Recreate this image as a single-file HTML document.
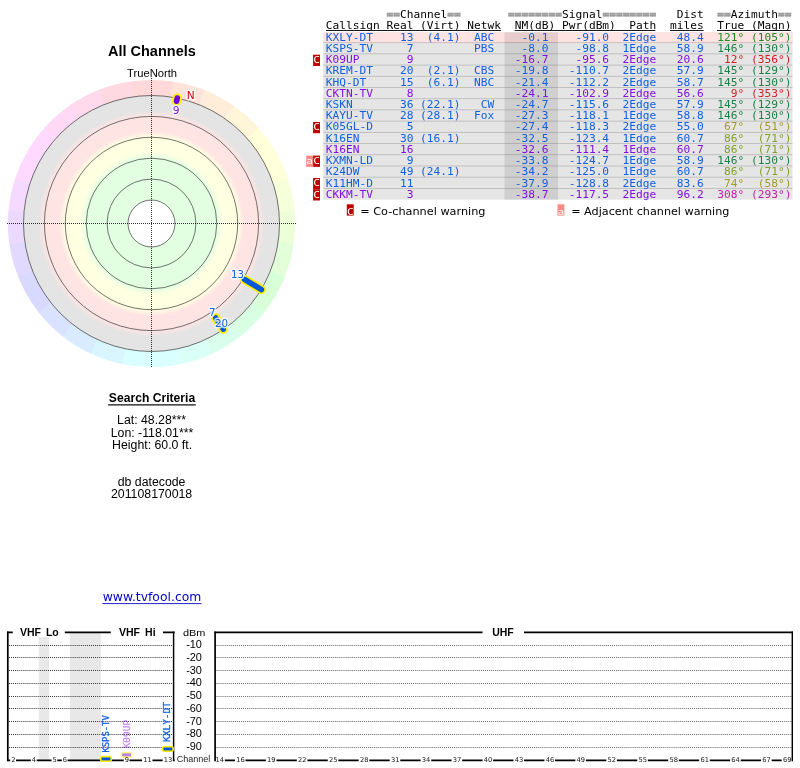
<!DOCTYPE html>
<html lang="en"><head><meta charset="utf-8"><title>TV Fool - All Channels radar plot</title>
<style>
html,body{margin:0;padding:0;background:#fff;}
body{width:800px;height:768px;position:relative;overflow:hidden;font-family:"Liberation Sans",Arial,sans-serif;color:#000;}
.gfx{position:absolute;left:0;top:0;}
.rl{font-family:"DejaVu Sans","Liberation Sans",sans-serif;paint-order:stroke;stroke:#fff;stroke-opacity:.8;stroke-width:2.8px;stroke-linejoin:round;}
.vt{font-family:"DejaVu Sans Mono","Liberation Mono",monospace;}
.bt{font-family:"DejaVu Sans Mono","Liberation Mono",monospace;}
.t{position:absolute;white-space:pre;line-height:1;}
.c{transform:translateX(-50%);text-align:center;}
.title{font-weight:bold;}

.sc{font-weight:bold;}

.link{font-family:"DejaVu Sans","Liberation Sans",sans-serif;color:#0000cc;}
.leg{font-family:"DejaVu Sans","Liberation Sans",sans-serif;}
.m{font-family:"DejaVu Sans Mono","Liberation Mono",monospace;font-size:11.21px;transform:scaleY(0.9);transform-origin:0 9.1px;}
.hd{color:#000;}
.eq{color:#9c9c9c;font-weight:bold;-webkit-text-stroke:0.5px #9c9c9c;}

.b{color:#1060e0}.p{color:#8010e0}
.bl{font-weight:bold;}


#wrap{position:absolute;left:0;top:0;width:800px;height:768px;will-change:transform;}
.ch{font-family:"DejaVu Sans","Liberation Sans",sans-serif;color:#111;}
</style></head><body><div id="wrap">
<svg class="gfx" width="800" height="768" viewBox="0 0 800 768">
<defs>
<radialGradient id="rg" gradientUnits="userSpaceOnUse" cx="151.5" cy="223.5" r="128.0">
<stop offset="0.0000" stop-color="#ffffff"/>
<stop offset="0.1836" stop-color="#ffffff"/>
<stop offset="0.1836" stop-color="#e2ffe2"/>
<stop offset="0.5102" stop-color="#e2ffe2"/>
<stop offset="0.5586" stop-color="#ffffe2"/>
<stop offset="0.6734" stop-color="#ffffe2"/>
<stop offset="0.7219" stop-color="#ffe4e4"/>
<stop offset="0.8367" stop-color="#ffe4e4"/>
<stop offset="0.8852" stop-color="#e4e4e4"/>
<stop offset="1.0000" stop-color="#e4e4e4"/>
</radialGradient>
</defs>
<g class="hue-ring"><path d="M151.50 223.50L172.30 81.41A143.60 143.60 0 0 1 205.22 90.33Z" fill="#ffe2d9"/><path d="M151.50 223.50L204.53 90.05A143.60 143.60 0 0 1 234.48 106.30Z" fill="#ffecd9"/><path d="M151.50 223.50L233.87 105.87A143.60 143.60 0 0 1 259.27 128.59Z" fill="#fff6d9"/><path d="M151.50 223.50L258.77 128.03A143.60 143.60 0 0 1 288.05 179.05Z" fill="#ffffd9"/><path d="M151.50 223.50L287.81 178.34A143.60 143.60 0 0 1 294.62 211.73Z" fill="#f6ffd9"/><path d="M151.50 223.50L294.55 210.98A143.60 143.60 0 0 1 293.47 245.05Z" fill="#ecffd9"/><path d="M151.50 223.50L293.59 244.30A143.60 143.60 0 0 1 284.67 277.22Z" fill="#e2ffd9"/><path d="M151.50 223.50L284.95 276.53A143.60 143.60 0 0 1 263.68 313.15Z" fill="#d9ffd9"/><path d="M151.50 223.50L264.15 312.56A143.60 143.60 0 0 1 239.97 336.61Z" fill="#d9ffe2"/><path d="M151.50 223.50L240.56 336.15A143.60 143.60 0 0 1 211.51 353.96Z" fill="#d9ffec"/><path d="M151.50 223.50L212.19 353.65A143.60 143.60 0 0 1 179.81 364.28Z" fill="#d9fff6"/><path d="M151.50 223.50L180.55 364.13A143.60 143.60 0 0 1 121.72 363.98Z" fill="#d9ffff"/><path d="M151.50 223.50L122.45 364.13A143.60 143.60 0 0 1 90.13 353.33Z" fill="#d9f6ff"/><path d="M151.50 223.50L90.81 353.65A143.60 143.60 0 0 1 61.85 335.68Z" fill="#d9ecff"/><path d="M151.50 223.50L62.44 336.15A143.60 143.60 0 0 1 38.39 311.97Z" fill="#d9e2ff"/><path d="M151.50 223.50L38.85 312.56A143.60 143.60 0 0 1 17.77 275.83Z" fill="#d9d9ff"/><path d="M151.50 223.50L18.05 276.53A143.60 143.60 0 0 1 9.31 243.56Z" fill="#e2d9ff"/><path d="M151.50 223.50L9.41 244.30A143.60 143.60 0 0 1 8.51 210.24Z" fill="#ecd9ff"/><path d="M151.50 223.50L8.45 210.98A143.60 143.60 0 0 1 15.42 177.63Z" fill="#f6d9ff"/><path d="M151.50 223.50L15.19 178.34A143.60 143.60 0 0 1 44.73 127.47Z" fill="#ffd9ff"/><path d="M151.50 223.50L44.23 128.03A143.60 143.60 0 0 1 69.75 105.44Z" fill="#ffd9f6"/><path d="M151.50 223.50L69.13 105.87A143.60 143.60 0 0 1 99.17 89.77Z" fill="#ffd9ec"/><path d="M151.50 223.50L98.47 90.05A143.60 143.60 0 0 1 131.44 81.31Z" fill="#ffd9e2"/><path d="M151.50 223.50L130.70 81.41A143.60 143.60 0 0 1 173.05 81.53Z" fill="#ffd9d9"/></g>
<circle cx="151.5" cy="223.5" r="128.0" fill="url(#rg)"/>
<circle cx="151.5" cy="223.5" r="23.5" fill="none" stroke="#2c2c2c" stroke-width="0.66"/>
<circle cx="151.5" cy="223.5" r="44.4" fill="none" stroke="#2c2c2c" stroke-width="0.66"/>
<circle cx="151.5" cy="223.5" r="65.3" fill="none" stroke="#2c2c2c" stroke-width="0.66"/>
<circle cx="151.5" cy="223.5" r="86.2" fill="none" stroke="#2c2c2c" stroke-width="0.66"/>
<circle cx="151.5" cy="223.5" r="107.1" fill="none" stroke="#2c2c2c" stroke-width="0.66"/>
<circle cx="151.5" cy="223.5" r="128.0" fill="none" stroke="#2c2c2c" stroke-width="0.66"/>
<path d="M7 223.5 H297" stroke="#000" stroke-opacity="0.8" stroke-width="1" stroke-dasharray="1 1" fill="none"/>
<path d="M151.5 78 V367.5" stroke="#000" stroke-opacity="0.8" stroke-width="1" stroke-dasharray="1 1" fill="none"/>
<g stroke-linecap="round" opacity="1"><path d="M215.69 317.95L223.33 329.20" stroke="#ffee00" stroke-width="9.4"/><path d="M215.69 317.95L223.33 329.20" stroke="#0058d8" stroke-width="5.4"/></g>
<g stroke-linecap="round" opacity="1"><path d="M244.50 279.38L261.39 289.53" stroke="#ffee00" stroke-width="9.0"/><path d="M244.50 279.38L261.39 289.53" stroke="#0058d8" stroke-width="5.6"/></g>
<g stroke-linecap="round" opacity="1"><path d="M176.61 101.15L177.26 98.02" stroke="#ffee00" stroke-width="9.4"/><path d="M176.61 101.15L177.26 98.02" stroke="#7000e0" stroke-width="5.6"/></g>
<text x="231.1" y="277.6" font-size="10.2" fill="#1060e0" text-anchor="start" class="rl">13</text>
<text x="209.0" y="315.6" font-size="10.3" fill="#1060e0" text-anchor="start" class="rl">7</text>
<text x="214.9" y="327.1" font-size="10.3" fill="#1060e0" text-anchor="start" class="rl">20</text>
<text x="172.85" y="114.2" font-size="10.6" fill="#8010e0" text-anchor="start" class="rl">9</text>
<text x="186.7" y="98.9" font-size="10.6" fill="#cc0000" text-anchor="start" class="rl">N</text>
<rect x="323.25" y="32.3" width="469.25" height="167.40" fill="#e5e5e5"/>
<rect x="323.25" y="32.3" width="469.25" height="10.40" fill="#ffe2e2"/>
<rect x="504.5" y="32.3" width="53.5" height="167.40" fill="#000" opacity="0.095"/>
<rect x="323.25" y="42.25" width="469.25" height="0.8" fill="#000" opacity="0.2"/>
<rect x="323.25" y="53.46" width="469.25" height="0.8" fill="#000" opacity="0.2"/>
<rect x="323.25" y="64.67" width="469.25" height="0.8" fill="#000" opacity="0.2"/>
<rect x="323.25" y="75.88" width="469.25" height="0.8" fill="#000" opacity="0.2"/>
<rect x="323.25" y="87.09" width="469.25" height="0.8" fill="#000" opacity="0.2"/>
<rect x="323.25" y="98.30" width="469.25" height="0.8" fill="#000" opacity="0.2"/>
<rect x="323.25" y="109.51" width="469.25" height="0.8" fill="#000" opacity="0.2"/>
<rect x="323.25" y="120.72" width="469.25" height="0.8" fill="#000" opacity="0.2"/>
<rect x="323.25" y="131.93" width="469.25" height="0.8" fill="#000" opacity="0.2"/>
<rect x="323.25" y="143.14" width="469.25" height="0.8" fill="#000" opacity="0.2"/>
<rect x="323.25" y="154.35" width="469.25" height="0.8" fill="#000" opacity="0.2"/>
<rect x="323.25" y="165.56" width="469.25" height="0.8" fill="#000" opacity="0.2"/>
<rect x="323.25" y="176.77" width="469.25" height="0.8" fill="#000" opacity="0.2"/>
<rect x="323.25" y="187.98" width="469.25" height="0.8" fill="#000" opacity="0.2"/>
<path d="M326 30.5H501 M514.7 30.5H655.3 M670 30.5H703.6 M717 30.5H790.6" stroke="#1a1a1a" stroke-width="1" fill="none"/>
<path d="M108.2 404.9H195.8" stroke="#111" stroke-width="1.4" fill="none"/>
<path d="M102.4 603.6H201.6" stroke="#2020d0" stroke-width="1" fill="none"/>
<rect x="38.9" y="632.4" width="10.3" height="127.89999999999998" fill="#e8e8e8"/>
<rect x="69.8" y="632.4" width="31.1" height="127.89999999999998" fill="#e8e8e8"/>
<path d="M9 645.50H172.6" stroke="#333" stroke-width="1" stroke-dasharray="1 1.05"/>
<path d="M216.4 645.50H791.4" stroke="#666" stroke-width="1" stroke-dasharray="1 1.05"/>
<path d="M9 657.50H172.6" stroke="#333" stroke-width="1" stroke-dasharray="1 1.05"/>
<path d="M216.4 657.50H791.4" stroke="#666" stroke-width="1" stroke-dasharray="1 1.05"/>
<path d="M9 670.50H172.6" stroke="#333" stroke-width="1" stroke-dasharray="1 1.05"/>
<path d="M216.4 670.50H791.4" stroke="#666" stroke-width="1" stroke-dasharray="1 1.05"/>
<path d="M9 683.50H172.6" stroke="#333" stroke-width="1" stroke-dasharray="1 1.05"/>
<path d="M216.4 683.50H791.4" stroke="#666" stroke-width="1" stroke-dasharray="1 1.05"/>
<path d="M9 696.50H172.6" stroke="#333" stroke-width="1" stroke-dasharray="1 1.05"/>
<path d="M216.4 696.50H791.4" stroke="#666" stroke-width="1" stroke-dasharray="1 1.05"/>
<path d="M9 708.50H172.6" stroke="#333" stroke-width="1" stroke-dasharray="1 1.05"/>
<path d="M216.4 708.50H791.4" stroke="#666" stroke-width="1" stroke-dasharray="1 1.05"/>
<path d="M9 721.50H172.6" stroke="#333" stroke-width="1" stroke-dasharray="1 1.05"/>
<path d="M216.4 721.50H791.4" stroke="#666" stroke-width="1" stroke-dasharray="1 1.05"/>
<path d="M9 734.50H172.6" stroke="#333" stroke-width="1" stroke-dasharray="1 1.05"/>
<path d="M216.4 734.50H791.4" stroke="#666" stroke-width="1" stroke-dasharray="1 1.05"/>
<path d="M9 747.50H172.6" stroke="#333" stroke-width="1" stroke-dasharray="1 1.05"/>
<path d="M216.4 747.50H791.4" stroke="#666" stroke-width="1" stroke-dasharray="1 1.05"/>
<rect x="13.5" y="626" width="50.5" height="11.2" fill="#fff"/><rect x="111.5" y="626" width="51" height="11.2" fill="#fff"/><rect x="483" y="626" width="40.5" height="11.2" fill="#fff"/>
<path d="M7.8 631.55 V761.15" stroke="#000" stroke-width="1.7" fill="none"/><path d="M173.6 631.55 V761.15" stroke="#000" stroke-width="1.45" fill="none"/>
<path d="M7 632.4 H12.8 M64.8 632.4 H110.8 M163 632.4 H174.6" stroke="#000" stroke-width="1.7" fill="none"/>
<path d="M215.1 631.55 V761.15" stroke="#000" stroke-width="1.7" fill="none"/><path d="M792.3 631.55 V761.15" stroke="#000" stroke-width="1.45" fill="none"/>
<path d="M214.3 632.4 H482.5 M524 632.4 H793" stroke="#000" stroke-width="1.7" fill="none"/>
<path d="M7.00 760.3H10.20 M16.00 760.3H30.84 M36.64 760.3H51.48 M57.28 760.3H61.80 M67.60 760.3H103.08 M108.88 760.3H123.72 M129.52 760.3H142.06 M152.46 760.3H162.70 M173.10 760.3H174.60" stroke="#000" stroke-width="1.7" fill="none"/>
<path d="M224.90 760.3H234.93 M245.53 760.3H265.88 M276.48 760.3H296.83 M307.43 760.3H327.78 M338.38 760.3H358.72 M369.32 760.3H389.67 M400.27 760.3H420.62 M431.22 760.3H451.57 M462.17 760.3H482.52 M493.12 760.3H513.46 M524.06 760.3H544.41 M555.01 760.3H575.36 M585.96 760.3H606.31 M616.91 760.3H637.26 M647.86 760.3H668.20 M678.80 760.3H699.15 M709.75 760.3H730.10 M740.70 760.3H761.05 M771.65 760.3H781.68 M792.28 760.3H793.00" stroke="#000" stroke-width="1.7" fill="none"/>
<g stroke-linecap="round" opacity="1"><path d="M102.98 758.94H108.98" stroke="#ffee00" stroke-width="6.3"/><path d="M101.58 758.94H110.38" stroke="#0058d8" stroke-width="2.9" stroke-linecap="butt"/></g>
<g stroke-linecap="round" opacity="0.5"><path d="M123.62 754.85H129.62" stroke="#ffee00" stroke-width="6.3"/><path d="M122.22 754.85H131.02" stroke="#7000e0" stroke-width="2.9" stroke-linecap="butt"/></g>
<g stroke-linecap="round" opacity="1"><path d="M164.90 748.97H170.90" stroke="#ffee00" stroke-width="6.3"/><path d="M163.50 748.97H172.30" stroke="#0058d8" stroke-width="2.9" stroke-linecap="butt"/></g>
<text transform="translate(109.40 752.60) rotate(-90)" font-size="8.6" fill="#1060e0" stroke="#1060e0" stroke-width="0.3" opacity="1" textLength="37.4" lengthAdjust="spacingAndGlyphs" class="vt">KSPS-TV</text>
<text transform="translate(130.30 748.30) rotate(-90)" font-size="8.6" fill="#8010e0" stroke="#8010e0" stroke-width="0.3" opacity="0.5" textLength="28.3" lengthAdjust="spacingAndGlyphs" class="vt">K09UP</text>
<text transform="translate(170.40 742.00) rotate(-90)" font-size="8.6" fill="#1060e0" stroke="#1060e0" stroke-width="0.3" opacity="1" textLength="40.0" lengthAdjust="spacingAndGlyphs" class="vt">KXLY-DT</text>
<rect x="313.10" y="54.72" width="6.9" height="11.25" fill="#c00000"/>
<text transform="translate(316.55 63.17) scale(1 0.84)" font-size="11.21" fill="#fff" text-anchor="middle" class="bt">C</text>
<rect x="313.10" y="121.98" width="6.9" height="11.25" fill="#c00000"/>
<text transform="translate(316.55 130.43) scale(1 0.84)" font-size="11.21" fill="#fff" text-anchor="middle" class="bt">C</text>
<rect x="313.10" y="155.61" width="6.9" height="11.25" fill="#c00000"/>
<text transform="translate(316.55 164.06) scale(1 0.84)" font-size="11.21" fill="#fff" text-anchor="middle" class="bt">C</text>
<rect x="306.20" y="155.61" width="6.9" height="11.25" fill="#ff8888"/>
<text transform="translate(309.65 164.06) scale(1 0.84)" font-size="11.21" fill="#fff" text-anchor="middle" class="bt">a</text>
<rect x="313.10" y="178.03" width="6.9" height="11.25" fill="#c00000"/>
<text transform="translate(316.55 186.48) scale(1 0.84)" font-size="11.21" fill="#fff" text-anchor="middle" class="bt">C</text>
<rect x="313.10" y="189.24" width="6.9" height="11.25" fill="#c00000"/>
<text transform="translate(316.55 197.69) scale(1 0.84)" font-size="11.21" fill="#fff" text-anchor="middle" class="bt">C</text>
<rect x="346.80" y="204.30" width="6.9" height="11.30" fill="#c00000"/>
<text transform="translate(350.25 214.80) scale(1 0.84)" font-size="11.21" fill="#fff" text-anchor="middle" class="bt">C</text>
<rect x="557.50" y="204.30" width="6.9" height="11.30" fill="#ff8888"/>
<text transform="translate(560.95 214.80) scale(1 0.84)" font-size="11.21" fill="#fff" text-anchor="middle" class="bt">a</text>
</svg>
<div class="t title c" style="left:151.90px;top:43.77px;font-size:14.5px;">All Channels</div>
<div class="t sub c" style="left:152.10px;top:68.42px;font-size:11.2px;">TrueNorth</div>
<div class="t sc c" style="left:152.00px;top:391.95px;font-size:12.13px;">Search Criteria</div>
<div class="t crit c" style="left:151.60px;top:413.87px;font-size:12.3px;">Lat: 48.28***</div>
<div class="t crit c" style="left:152.00px;top:426.87px;font-size:12.3px;">Lon: -118.01***</div>
<div class="t crit c" style="left:152.10px;top:438.87px;font-size:12.3px;">Height: 60.0 ft.</div>
<div class="t crit c" style="left:151.60px;top:475.87px;font-size:12.3px;">db datecode</div>
<div class="t crit c" style="left:151.60px;top:487.87px;font-size:12.3px;">201108170018</div>
<a class="t link c" style="left:152.00px;top:590.82px;font-size:12.39px;">www.tvfool.com</a>
<span class="t m hd" style="left:386.45px;top:8.90px"><span class="eq">==</span>Channel<span class="eq">==</span></span>
<span class="t m hd" style="left:507.95px;top:8.90px"><span class="eq">========</span>Signal<span class="eq">========</span></span>
<span class="t m hd" style="left:676.70px;top:8.90px">Dist</span>
<span class="t m hd" style="left:717.20px;top:8.90px"><span class="eq">==</span>Azimuth<span class="eq">==</span></span>
<span class="t m hd u" style="left:325.70px;top:19.90px">Callsign Real (Virt) Netwk</span>
<span class="t m hd u" style="left:514.70px;top:19.90px">NM(dB) Pwr(dBm)  Path</span>
<span class="t m hd u" style="left:669.95px;top:19.90px">miles</span>
<span class="t m hd u" style="left:717.20px;top:19.90px">True (Magn)</span>
<span class="t m b" style="left:325.70px;top:31.90px">KXLY-DT    13  (4.1)  ABC</span>
<span class="t m b" style="left:514.70px;top:31.90px"> -0.1    -91.0  2Edge</span>
<span class="t m b" style="left:669.95px;top:31.90px"> 48.4</span>
<span class="t m" style="left:717.20px;top:31.90px;color:#208a20">121° (105°)</span>
<span class="t m b" style="left:325.70px;top:42.90px">KSPS-TV     7         PBS</span>
<span class="t m b" style="left:514.70px;top:42.90px"> -8.0    -98.8  1Edge</span>
<span class="t m b" style="left:669.95px;top:42.90px"> 58.9</span>
<span class="t m" style="left:717.20px;top:42.90px;color:#1a8048">146° (130°)</span>
<span class="t m p" style="left:325.70px;top:53.90px">K09UP       9</span>
<span class="t m p" style="left:514.70px;top:53.90px">-16.7    -95.6  2Edge</span>
<span class="t m p" style="left:669.95px;top:53.90px"> 20.6</span>
<span class="t m" style="left:717.20px;top:53.90px;color:#cc2020"> 12° (356°)</span>
<span class="t m b" style="left:325.70px;top:64.90px">KREM-DT    20  (2.1)  CBS</span>
<span class="t m b" style="left:514.70px;top:64.90px">-19.8   -110.7  2Edge</span>
<span class="t m b" style="left:669.95px;top:64.90px"> 57.9</span>
<span class="t m" style="left:717.20px;top:64.90px;color:#1a8046">145° (129°)</span>
<span class="t m b" style="left:325.70px;top:76.90px">KHQ-DT     15  (6.1)  NBC</span>
<span class="t m b" style="left:514.70px;top:76.90px">-21.4   -112.2  2Edge</span>
<span class="t m b" style="left:669.95px;top:76.90px"> 58.7</span>
<span class="t m" style="left:717.20px;top:76.90px;color:#1a8046">145° (130°)</span>
<span class="t m p" style="left:325.70px;top:87.90px">CKTN-TV     8</span>
<span class="t m p" style="left:514.70px;top:87.90px">-24.1   -102.9  2Edge</span>
<span class="t m p" style="left:669.95px;top:87.90px"> 56.6</span>
<span class="t m" style="left:717.20px;top:87.90px;color:#cc2626">  9° (353°)</span>
<span class="t m b" style="left:325.70px;top:98.90px">KSKN       36 (22.1)   CW</span>
<span class="t m b" style="left:514.70px;top:98.90px">-24.7   -115.6  2Edge</span>
<span class="t m b" style="left:669.95px;top:98.90px"> 57.9</span>
<span class="t m" style="left:717.20px;top:98.90px;color:#1a8046">145° (129°)</span>
<span class="t m b" style="left:325.70px;top:109.90px">KAYU-TV    28 (28.1)  Fox</span>
<span class="t m b" style="left:514.70px;top:109.90px">-27.3   -118.1  1Edge</span>
<span class="t m b" style="left:669.95px;top:109.90px"> 58.8</span>
<span class="t m" style="left:717.20px;top:109.90px;color:#1a8048">146° (130°)</span>
<span class="t m b" style="left:325.70px;top:120.90px">K05GL-D     5</span>
<span class="t m b" style="left:514.70px;top:120.90px">-27.4   -118.3  2Edge</span>
<span class="t m b" style="left:669.95px;top:120.90px"> 55.0</span>
<span class="t m" style="left:717.20px;top:120.90px;color:#a8982a"> 67°  (51°)</span>
<span class="t m b" style="left:325.70px;top:132.90px">K16EN      30 (16.1)</span>
<span class="t m b" style="left:514.70px;top:132.90px">-32.5   -123.4  1Edge</span>
<span class="t m b" style="left:669.95px;top:132.90px"> 60.7</span>
<span class="t m" style="left:717.20px;top:132.90px;color:#84a028"> 86°  (71°)</span>
<span class="t m p" style="left:325.70px;top:143.90px">K16EN      16</span>
<span class="t m p" style="left:514.70px;top:143.90px">-32.6   -111.4  1Edge</span>
<span class="t m p" style="left:669.95px;top:143.90px"> 60.7</span>
<span class="t m" style="left:717.20px;top:143.90px;color:#84a028"> 86°  (71°)</span>
<span class="t m b" style="left:325.70px;top:154.90px">KXMN-LD     9</span>
<span class="t m b" style="left:514.70px;top:154.90px">-33.8   -124.7  1Edge</span>
<span class="t m b" style="left:669.95px;top:154.90px"> 58.9</span>
<span class="t m" style="left:717.20px;top:154.90px;color:#1a8048">146° (130°)</span>
<span class="t m b" style="left:325.70px;top:165.90px">K24DW      49 (24.1)</span>
<span class="t m b" style="left:514.70px;top:165.90px">-34.2   -125.0  1Edge</span>
<span class="t m b" style="left:669.95px;top:165.90px"> 60.7</span>
<span class="t m" style="left:717.20px;top:165.90px;color:#84a028"> 86°  (71°)</span>
<span class="t m b" style="left:325.70px;top:177.90px">K11HM-D    11</span>
<span class="t m b" style="left:514.70px;top:177.90px">-37.9   -128.8  2Edge</span>
<span class="t m b" style="left:669.95px;top:177.90px"> 83.6</span>
<span class="t m" style="left:717.20px;top:177.90px;color:#a09c28"> 74°  (58°)</span>
<span class="t m p" style="left:325.70px;top:188.90px">CKKM-TV     3</span>
<span class="t m p" style="left:514.70px;top:188.90px">-38.7   -117.5  2Edge</span>
<span class="t m p" style="left:669.95px;top:188.90px"> 96.2</span>
<span class="t m" style="left:717.20px;top:188.90px;color:#c020a8">308° (293°)</span>
<div class="t leg" style="left:360.20px;top:205.89px;font-size:11.27px;">= Co-channel warning</div>
<div class="t leg" style="left:571.20px;top:205.92px;font-size:11.2px;">= Adjacent channel warning</div>
<div class="t bl" style="left:20.00px;top:626.77px;font-size:10.5px;word-spacing:2px;">VHF Lo</div>
<div class="t bl" style="left:119.00px;top:626.77px;font-size:10.5px;word-spacing:2.2px;">VHF Hi</div>
<div class="t bl" style="left:492.20px;top:626.77px;font-size:10.5px;">UHF</div>
<div class="t db c" style="left:194.20px;top:626.57px;font-size:10.9px;transform:translateX(-50%) scaleY(0.8);transform-origin:50% 9.45px;">dBm</div>
<div class="t db c" style="left:194.00px;top:638.57px;font-size:10.9px;">-10</div>
<div class="t db c" style="left:194.00px;top:651.57px;font-size:10.9px;">-20</div>
<div class="t db c" style="left:194.00px;top:664.57px;font-size:10.9px;">-30</div>
<div class="t db c" style="left:194.00px;top:676.57px;font-size:10.9px;">-40</div>
<div class="t db c" style="left:194.00px;top:689.57px;font-size:10.9px;">-50</div>
<div class="t db c" style="left:194.00px;top:702.57px;font-size:10.9px;">-60</div>
<div class="t db c" style="left:194.00px;top:715.57px;font-size:10.9px;">-70</div>
<div class="t db c" style="left:194.00px;top:727.57px;font-size:10.9px;">-80</div>
<div class="t db c" style="left:194.00px;top:740.57px;font-size:10.9px;">-90</div>
<div class="t db" style="left:176.70px;top:754.52px;font-size:9.0px;color:#222;">Channel</div>
<div class="t ch c" style="left:13.30px;top:756.67px;font-size:6.7px;">2</div>
<div class="t ch c" style="left:33.94px;top:756.67px;font-size:6.7px;">4</div>
<div class="t ch c" style="left:54.58px;top:756.67px;font-size:6.7px;">5</div>
<div class="t ch c" style="left:64.90px;top:756.67px;font-size:6.7px;">6</div>
<div class="t ch c" style="left:126.82px;top:756.67px;font-size:6.7px;">9</div>
<div class="t ch c" style="left:147.46px;top:756.67px;font-size:6.7px;">11</div>
<div class="t ch c" style="left:168.10px;top:756.67px;font-size:6.7px;">13</div>
<div class="t ch c" style="left:219.80px;top:756.67px;font-size:6.7px;">14</div>
<div class="t ch c" style="left:240.43px;top:756.67px;font-size:6.7px;">16</div>
<div class="t ch c" style="left:271.38px;top:756.67px;font-size:6.7px;">19</div>
<div class="t ch c" style="left:302.33px;top:756.67px;font-size:6.7px;">22</div>
<div class="t ch c" style="left:333.28px;top:756.67px;font-size:6.7px;">25</div>
<div class="t ch c" style="left:364.22px;top:756.67px;font-size:6.7px;">28</div>
<div class="t ch c" style="left:395.17px;top:756.67px;font-size:6.7px;">31</div>
<div class="t ch c" style="left:426.12px;top:756.67px;font-size:6.7px;">34</div>
<div class="t ch c" style="left:457.07px;top:756.67px;font-size:6.7px;">37</div>
<div class="t ch c" style="left:488.02px;top:756.67px;font-size:6.7px;">40</div>
<div class="t ch c" style="left:518.96px;top:756.67px;font-size:6.7px;">43</div>
<div class="t ch c" style="left:549.91px;top:756.67px;font-size:6.7px;">46</div>
<div class="t ch c" style="left:580.86px;top:756.67px;font-size:6.7px;">49</div>
<div class="t ch c" style="left:611.81px;top:756.67px;font-size:6.7px;">52</div>
<div class="t ch c" style="left:642.76px;top:756.67px;font-size:6.7px;">55</div>
<div class="t ch c" style="left:673.70px;top:756.67px;font-size:6.7px;">58</div>
<div class="t ch c" style="left:704.65px;top:756.67px;font-size:6.7px;">61</div>
<div class="t ch c" style="left:735.60px;top:756.67px;font-size:6.7px;">64</div>
<div class="t ch c" style="left:766.55px;top:756.67px;font-size:6.7px;">67</div>
<div class="t ch c" style="left:787.18px;top:756.67px;font-size:6.7px;">69</div>
</div></body></html>
